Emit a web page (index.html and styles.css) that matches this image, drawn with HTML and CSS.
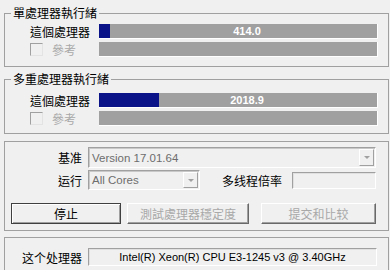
FILE: index.html
```html
<!DOCTYPE html>
<html>
<head>
<meta charset="utf-8">
<link rel="stylesheet" href="styles.css">
</head>
<body>
<div class="app">
  <fieldset class="group g1">
    <legend>單處理器執行緒</legend>
    <div class="gbody">
      <div class="row">
        <span class="lbl">這個處理器</span>
        <div class="bar"><div class="fill" style="width:11px"></div><span class="val">414.0</span></div>
      </div>
      <div class="row">
        <span class="lbl chk"><span class="cbox"></span><span class="dis">參考</span></span>
        <div class="bar"></div>
      </div>
    </div>
  </fieldset>

  <fieldset class="group g2">
    <legend>多重處理器執行緒</legend>
    <div class="gbody">
      <div class="row">
        <span class="lbl">這個處理器</span>
        <div class="bar"><div class="fill" style="width:60px"></div><span class="val">2018.9</span></div>
      </div>
      <div class="row">
        <span class="lbl chk"><span class="cbox"></span><span class="dis">參考</span></span>
        <div class="bar"></div>
      </div>
    </div>
  </fieldset>

  <div class="panel p3">
    <div class="frow r1">
      <span class="flbl">基准</span>
      <div class="combo wide"><span class="ctext">Version 17.01.64</span><span class="drop"><span class="tri"></span></span></div>
    </div>
    <div class="frow r2">
      <span class="flbl">运行</span>
      <div class="combo small"><span class="ctext">All Cores</span><span class="drop"><span class="tri"></span></span></div>
      <span class="mlbl">多线程倍率</span>
      <div class="field mfield"></div>
    </div>
    <div class="frow r3">
      <button class="btn b1">停止</button>
      <button class="btn b2 off">測試處理器穩定度</button>
      <button class="btn b3 off">提交和比较</button>
    </div>
  </div>

  <div class="panel p4">
    <div class="frow">
      <span class="flbl">这个处理器</span>
      <div class="field cpu">Intel(R) Xeon(R) CPU E3-1245 v3 @ 3.40GHz</div>
    </div>
  </div>
</div>
</body>
</html>
```

FILE: styles.css
```css
* { box-sizing: border-box; }
html, body { margin: 0; padding: 0; }
body {
  background: #f0f0f0;
  width: 390px;
  height: 270px;
  overflow: hidden;
  font-family: "Noto Sans CJK TC", "Noto Sans CJK SC", sans-serif;
  font-size: 12px;
  color: #000;
}
.app { padding-left: 4px; width: 389px; }

.group {
  margin: 0;
  padding: 0;
  border: 1px solid #a0a0a0;
  min-width: 0;
}
.group legend {
  margin-left: 6px;
  padding: 0 2px;
  line-height: 16px;
  font-size: 12px;
}
.g1 { margin-top: 5px; }
.g1 .gbody { padding: 3px 10px 9px 25px; }
.g2 { margin-top: 4px; }
.g2 .gbody { padding: 6px 10px 7px 25px; }

.row { display: flex; align-items: center; height: 15px; }
.row + .row { margin-top: 3px; }
.lbl { width: 69px; flex: none; line-height: 15px; white-space: nowrap; }
.chk { display: flex; align-items: center; }
.cbox {
  width: 13px; height: 13px;
  border: 1px solid;
  border-color: #a0a0a0 #e3e3e3 #e3e3e3 #a0a0a0;
  background: #f0f0f0;
  margin-right: 9px;
}
.dis { color: #a8a8a8; }
.bar {
  flex: 1;
  height: 15px;
  background: #a0a0a0;
  border-right: 1px solid #fff;
  border-bottom: 1px solid #fff;
  display: grid;
}
.fill { grid-area: 1 / 1; background: #0a1488; height: 100%; }
.val {
  grid-area: 1 / 1;
  justify-self: center;
  align-self: center;
  color: #fff;
  font-family: "Liberation Sans", Arial, sans-serif;
  font-weight: bold;
  font-size: 11px;
  line-height: 14px;
  padding-left: 18px;
}

.panel { border: 1px solid #a0a0a0; }
.p3 { margin-top: 7px; padding: 5px 12px 6px 0; }
.p4 { margin-top: 6px; padding: 10px 10px 10px 0; }

.frow { display: flex; align-items: center; }
.r2 { margin-top: 2px; }
.r3 { margin-top: 13px; }
.flbl { width: 77px; text-align: right; margin-right: 6px; flex: none; white-space: nowrap; }

.combo {
  height: 21px;
  display: flex;
  align-items: center;
  justify-content: space-between;
  border: 1px solid;
  border-color: #a0a0a0 #fff #fff #a0a0a0;
  box-shadow: inset 1px 1px 0 #c8c8c8;
  padding: 0 1px 0 3px;
  background: #f0f0f0;
}
.combo.wide { flex: 1; }
.combo.small { width: 112px; height: 20px; }
.ctext {
  font-family: "Liberation Sans", Arial, sans-serif;
  font-size: 11.5px;
  color: #6d6d6d;
}
.drop {
  width: 15px; height: 17px;
  border: 1px solid;
  border-color: #fff #a0a0a0 #a0a0a0 #fff;
  display: flex; align-items: center; justify-content: center;
}
.combo.small .drop { height: 16px; }
.tri {
  width: 0; height: 0;
  border-left: 3px solid transparent;
  border-right: 3px solid transparent;
  border-top: 3px solid #a0a0a0;
}
.mlbl { margin-left: 22px; white-space: nowrap; }
.field {
  border: 1px solid;
  border-color: #a0a0a0 #fff #fff #a0a0a0;
  box-shadow: inset 1px 1px 0 #e0e0e0;
  background: #f0f0f0;
}
.mfield { margin-left: 10px; flex: 1; height: 17px; }
.cpu {
  flex: 1; height: 18px;
  margin-right: 1px;
  text-align: center;
  font-family: "Liberation Sans", Arial, sans-serif;
  font-size: 11px;
  line-height: 16px;
}

.btn {
  height: 21px;
  margin: 0;
  padding: 0;
  font-family: "Noto Sans CJK TC", "Noto Sans CJK SC", sans-serif;
  font-size: 12px;
  line-height: 17px;
  color: #000;
  background: #f0f0f0;
  border: 1px solid #404040;
  box-shadow: inset 1px 1px 0 #fff, inset -1px -1px 0 #a0a0a0;
}
.btn.off {
  color: #a8a8a8;
  border: 1px solid;
  border-color: #fff #696969 #696969 #fff;
  box-shadow: inset -1px -1px 0 #a0a0a0;
}
.b1 { margin-left: 6px; width: 111px; }
.b2 { margin-left: 6px; width: 123px; }
.b3 { margin-left: 12px; width: 116px; }
```
